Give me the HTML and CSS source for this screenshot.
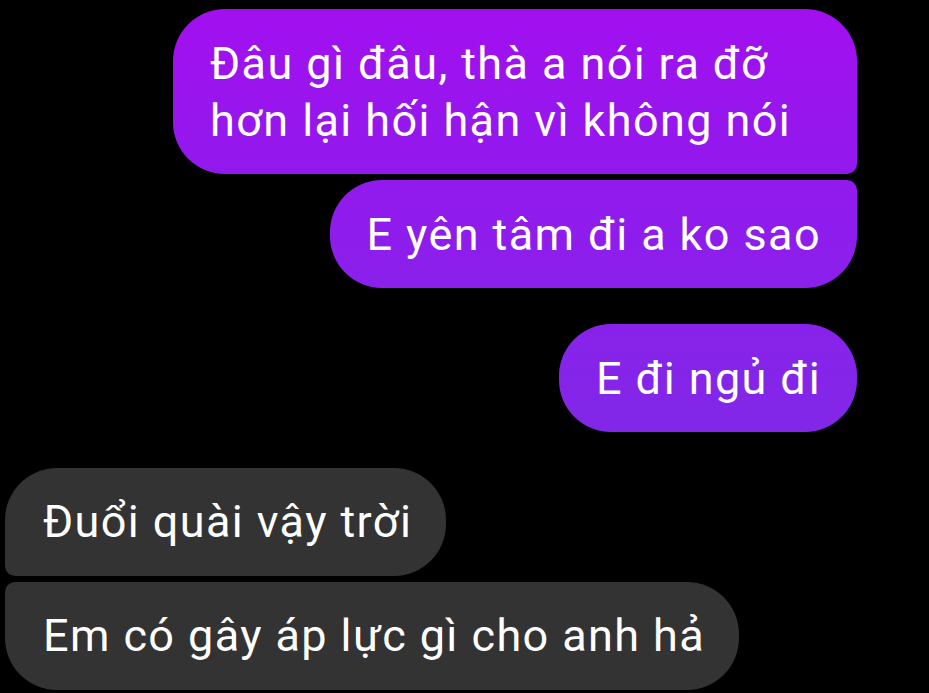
FILE: index.html
```html
<!DOCTYPE html>
<html lang="vi">
<head>
<meta charset="utf-8">
<link rel="stylesheet" href="styles.css">
</head>
<body>
<div class="chat">
  <div class="group mine">
    <div class="bubble first wide">Đâu gì đâu, thà a nói ra đỡ hơn lại hối hận vì không nói</div>
    <div class="bubble last">E yên tâm đi a ko sao</div>
  </div>
  <div class="group mine">
    <div class="bubble single">E đi ngủ đi</div>
  </div>
  <div class="group theirs">
    <div class="bubble first">Đuổi quài vậy trời</div>
    <div class="bubble last">Em có gây áp lực gì cho anh hả</div>
  </div>
</div>
</body>
</html>
```
FILE: styles.css
```css
html, body {
  margin: 0;
  padding: 0;
  background: #000;
  height: 100%;
  overflow: hidden;
}
.chat {
  display: flex;
  flex-direction: column;
  gap: 36px;
  padding: 9px 72px 0 5px;
  font-family: Roboto, "Noto Sans", sans-serif;
  font-size: 45px;
  letter-spacing: 1.4px;
  line-height: 57px;
  color: #fff;
}
.group {
  display: flex;
  flex-direction: column;
  gap: 6px;
}
.mine { align-items: flex-end; }
.theirs { align-items: flex-start; }
.bubble {
  box-sizing: border-box;
  padding: 26px 36px 25px 37px;
  border-radius: 52px;
  white-space: nowrap;
}
.bubble.wide {
  white-space: normal;
  width: 684px;
}
.mine .bubble {
  background: linear-gradient(180deg, #a30fef 0px, #9418ee 150px, #8227e8 420px, #7a2de6 693px);
  background-attachment: fixed;
}
.theirs .bubble {
  background: #333333;
  padding-top: 25px;
  padding-bottom: 26px;
  padding-left: 38px;
  padding-right: 34px;
}
.mine .first { border-bottom-right-radius: 10px; }
.mine .last { border-top-right-radius: 10px; }
.theirs .first { border-bottom-left-radius: 10px; }
.theirs .last { border-top-left-radius: 10px; }
```
